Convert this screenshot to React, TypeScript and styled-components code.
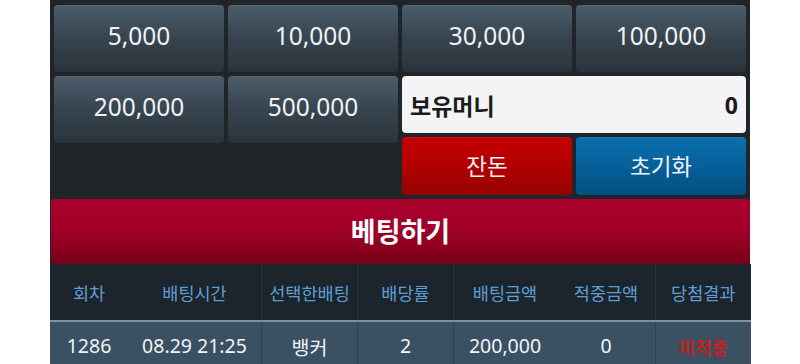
import React from 'react';
import styled, { createGlobalStyle, css } from 'styled-components';

const GlobalStyle = createGlobalStyle`
  html, body {
    margin: 0;
    padding: 0;
    background: #ffffff;
  }
  body {
    font-family: 'Noto Sans', 'Noto Sans CJK KR', sans-serif;
  }
`;

const Panel = styled.div`
  width: 700px;
  margin-left: 50px;
  background: #1f2529;
  padding: 5px 0 0;
  box-sizing: border-box;
`;

const TopGrid = styled.div`
  display: grid;
  grid-template-columns: 1fr 1fr;
  gap: 4px;
  padding: 0 4px;
`;

const ChipGrid = styled.div`
  display: grid;
  grid-template-columns: 1fr 1fr;
  grid-auto-rows: 67px;
  gap: 4px;
  align-content: start;
`;

const RightCol = styled.div`
  display: flex;
  flex-direction: column;
  gap: 4px;
`;

const Pair = styled.div<{ $h: number }>`
  display: grid;
  grid-template-columns: 1fr 1fr;
  gap: 4px;
  height: ${({ $h }) => $h}px;
`;

const tones = {
  chip: css`
    background: linear-gradient(to bottom, #4b5c6a 0%, #37444f 50%, #2a333b 100%);
    font-size: 24.5px;
    padding-bottom: 6px;
  `,
  red: css`
    background: linear-gradient(to bottom, #c40000 0%, #b20000 50%, #960000 100%);
    font-size: 22.5px;
    padding-bottom: 2px;
  `,
  blue: css`
    background: linear-gradient(to bottom, #0a70ae 0%, #06609a 50%, #054f82 100%);
    font-size: 22.5px;
    padding-bottom: 2px;
  `,
};

const Btn = styled.button<{ $tone: keyof typeof tones }>`
  border: none;
  border-radius: 4px;
  color: #eef2f5;
  font-family: 'Noto Sans', 'Noto Sans CJK KR', sans-serif;
  display: flex;
  align-items: center;
  justify-content: center;
  padding: 0;
  box-shadow: inset 0 1px 0 rgba(255, 255, 255, 0.06);
  ${({ $tone }) => tones[$tone]}
`;

const MoneyBox = styled.div`
  height: 57px;
  background: #f4f4f6;
  border-radius: 4px;
  display: flex;
  align-items: center;
  justify-content: space-between;
  padding: 0 8px;
  font-size: 23px;
  font-weight: 700;
  color: #1b1b1b;
`;

const BetButton = styled.button`
  display: block;
  width: 699px;
  height: 65px;
  margin: 4px 0 0 1px;
  border: none;
  border-radius: 4px 4px 3px 3px;
  background: linear-gradient(to bottom, #aa002b 0%, #a10028 45%, #88001d 80%, #760016 100%);
  color: #ffffff;
  font-family: 'Noto Sans', 'Noto Sans CJK KR', sans-serif;
  font-size: 27px;
  font-weight: 700;
  padding: 0 0 2px;
`;

const Table = styled.table`
  width: 700px;
  border-collapse: collapse;
  table-layout: fixed;
`;

const Th = styled.th<{ $line: boolean }>`
  height: 56px;
  background: #1c252c;
  color: #5e9ed4;
  font-size: 17.5px;
  font-weight: 400;
  text-align: center;
  padding: 0;
  border-left: 1px solid ${({ $line }) => ($line ? '#27323b' : '#1c252c')};
`;

const Td = styled.td<{ $line: boolean; $lose?: boolean }>`
  height: 48px;
  background: #3a5063;
  color: #f2f4f6;
  font-size: 19.5px;
  text-align: center;
  vertical-align: top;
  padding: 10px 0 0;
  border-top: 2px solid #7e92a2;
  border-left: 1px solid ${({ $line }) => ($line ? '#2f4252' : '#3a5063')};
  ${({ $lose }) =>
    $lose &&
    css`
      color: #c4201f;
      font-size: 18px;
      font-weight: 700;
      padding-top: 12px;
    `}
`;

const widths = [77, 134, 96, 96, 103, 99, 95];
const heads = ['회차', '배팅시간', '선택한배팅', '배당률', '배팅금액', '적중금액', '당첨결과'];
const cells = ['1286', '08.29 21:25', '뱅커', '2', '200,000', '0', '미적중'];
// divider drawn on the left of these columns only
const lined = [false, false, true, true, true, false, true];

export default function App() {
  return (
    <>
      <GlobalStyle />
      <Panel>
        <TopGrid>
          <ChipGrid>
            <Btn $tone="chip">5,000</Btn>
            <Btn $tone="chip">10,000</Btn>
            <Btn $tone="chip">200,000</Btn>
            <Btn $tone="chip">500,000</Btn>
          </ChipGrid>
          <RightCol>
            <Pair $h={67}>
              <Btn $tone="chip">30,000</Btn>
              <Btn $tone="chip">100,000</Btn>
            </Pair>
            <MoneyBox>
              <span>보유머니</span>
              <span>0</span>
            </MoneyBox>
            <Pair $h={58}>
              <Btn $tone="red">잔돈</Btn>
              <Btn $tone="blue">초기화</Btn>
            </Pair>
          </RightCol>
        </TopGrid>
        <BetButton>베팅하기</BetButton>
        <Table>
          <colgroup>
            {widths.map((w, i) => (
              <col key={i} style={{ width: w }} />
            ))}
          </colgroup>
          <thead>
            <tr>
              {heads.map((h, i) => (
                <Th key={h} $line={lined[i]}>
                  {h}
                </Th>
              ))}
            </tr>
          </thead>
          <tbody>
            <tr>
              {cells.map((c, i) => (
                <Td key={i} $line={lined[i]} $lose={i === 6}>
                  {c}
                </Td>
              ))}
            </tr>
          </tbody>
        </Table>
      </Panel>
    </>
  );
}
